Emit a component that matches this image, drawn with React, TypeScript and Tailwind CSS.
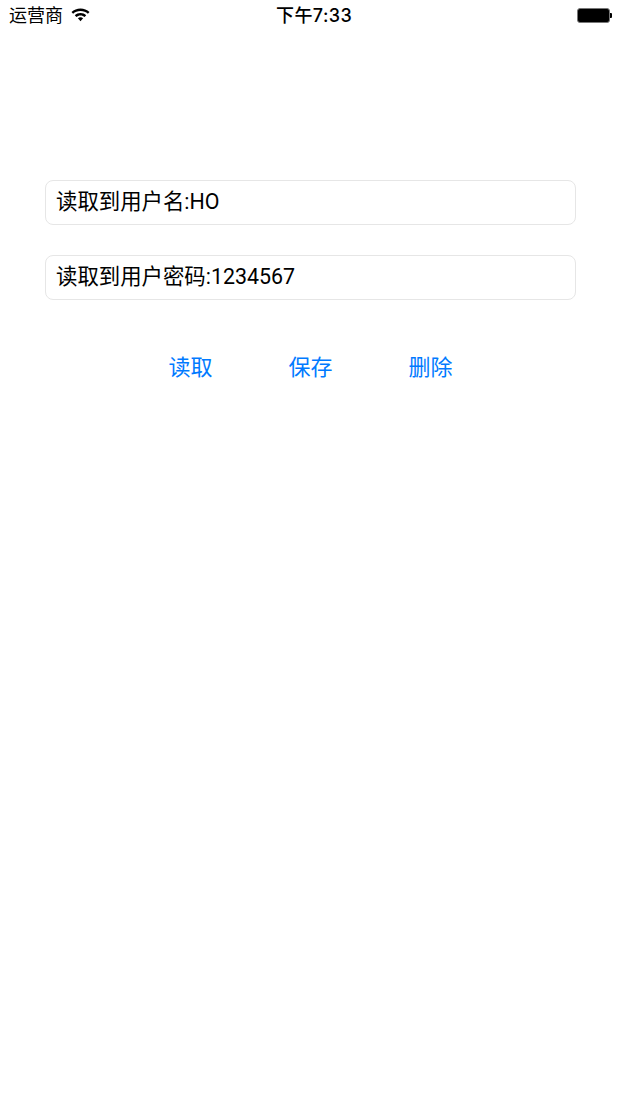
const font = "font-['Roboto','Noto_Sans_CJK_SC',sans-serif]";

function Wifi() {
  return (
    <svg width="19" height="14" viewBox="0 0 19 14" fill="#000">
      <path d="M9.5 0.5C6 0.5 2.9 1.8 0.5 4L2.1 5.8C4 4 6.6 3 9.5 3S15 4 16.9 5.8L18.5 4C16.1 1.8 13 0.5 9.5 0.5Z" />
      <path d="M9.5 5C7.3 5 5.3 5.8 3.8 7.2L5.4 9C6.5 8 7.9 7.4 9.5 7.4S12.5 8 13.6 9L15.2 7.2C13.7 5.8 11.7 5 9.5 5Z" />
      <path d="M9.5 9.2C8.5 9.2 7.6 9.6 6.9 10.2L9.5 13.2L12.1 10.2C11.4 9.6 10.5 9.2 9.5 9.2Z" />
    </svg>
  );
}

function Battery() {
  return (
    <div className="flex items-center mb-[1px]">
      <div className="w-[33px] h-[15px] rounded-[3px] border border-[#777] bg-black" />
      <div className="w-[2px] h-[5px] bg-black rounded-r-[1px]" />
    </div>
  );
}

function StatusBar() {
  return (
    <div className="relative flex items-center justify-between h-[32px] pl-[9px] pr-[9px] text-black">
      <div className="flex items-center gap-[8px]">
        <span className="text-[18px] leading-[32px]">运营商</span>
        <div className="mb-[3px]">
          <Wifi />
        </div>
      </div>
      <span className="absolute left-[276px] top-0 text-[18px] leading-[32px] font-medium font-['Inter','Noto_Sans_CJK_SC',sans-serif] tracking-[0.4px]">下午7:33</span>
      <Battery />
    </div>
  );
}

function Field({ text }: { text: string }) {
  return (
    <div className="h-[45px] rounded-[8px] border border-[#e6e6e6] pl-[10px] pb-[1px] flex items-center text-[21.4px] text-black">
      {text}
    </div>
  );
}

export default function App() {
  return (
    <div className={`${font} w-[621px] h-[1104px] bg-white flex flex-col`}>
      <StatusBar />
      <div className="mt-[148px] mx-[45px] flex flex-col gap-[30px]">
        <Field text="读取到用户名:HO" />
        <Field text="读取到用户密码:1234567" />
      </div>
      <div className="mt-[48px] flex justify-center gap-[76px] text-[22px] leading-[40px] text-[#007aff]">
        <button>读取</button>
        <button>保存</button>
        <button>删除</button>
      </div>
    </div>
  );
}
